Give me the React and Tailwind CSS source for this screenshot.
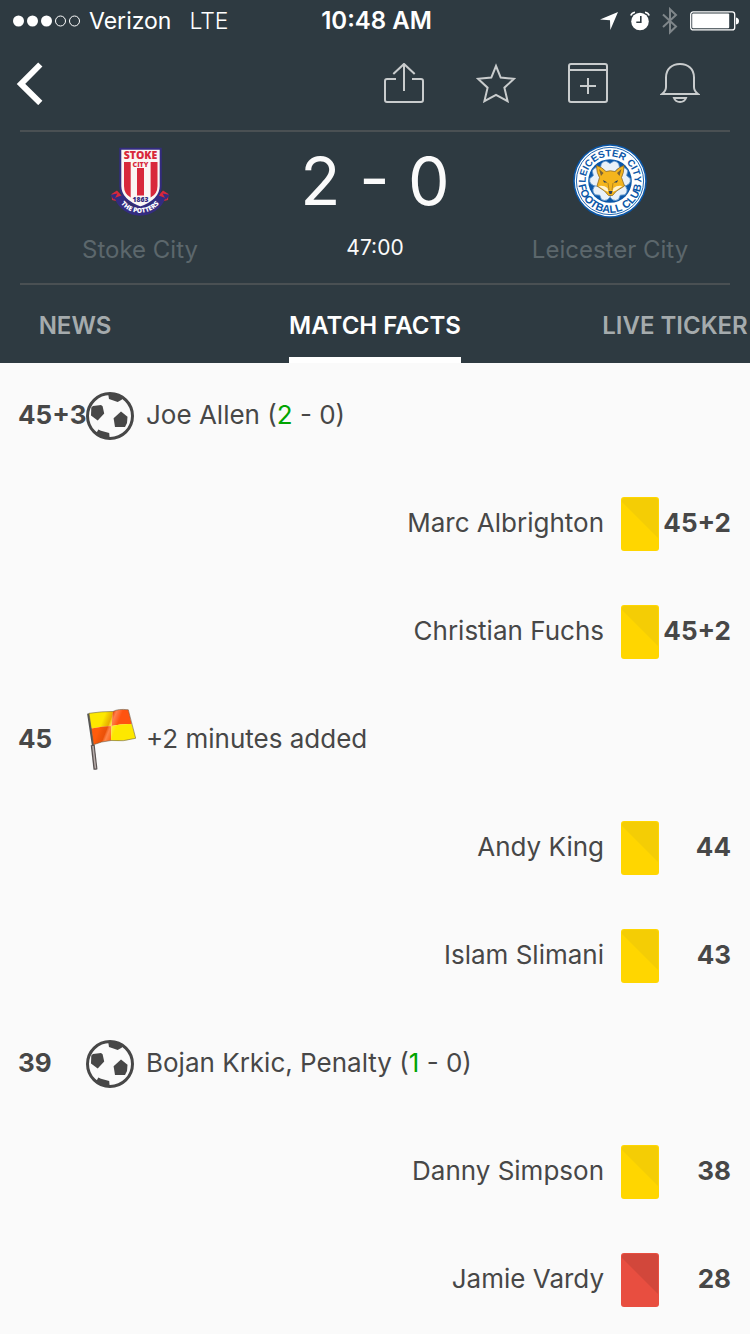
import React from 'react';

const events = [
  { side: 'home', time: '45+3', icon: 'goal', text: 'Joe Allen', score: ['2', '0'] },
  { side: 'away', time: '45+2', icon: 'yellow', text: 'Marc Albrighton' },
  { side: 'away', time: '45+2', icon: 'yellow', text: 'Christian Fuchs' },
  { side: 'home', time: '45', icon: 'flag', text: '+2 minutes added' },
  { side: 'away', time: '44', icon: 'yellow', text: 'Andy King' },
  { side: 'away', time: '43', icon: 'yellow', text: 'Islam Slimani' },
  { side: 'home', time: '39', icon: 'goal', text: 'Bojan Krkic, Penalty', score: ['1', '0'] },
  { side: 'away', time: '38', icon: 'yellow', text: 'Danny Simpson' },
  { side: 'away', time: '28', icon: 'red', text: 'Jamie Vardy' },
];

function StatusBar() {
  return (
    <div className="grid h-10 grid-cols-[1fr_auto_1fr] items-center pl-[13px] pr-[10px] pt-0.5 text-2xl text-white">
      <div className="flex items-center text-[23px]">
        <svg width="68" height="12" viewBox="0 0 68 12" aria-hidden="true">
          <g fill="#fff">
            <circle cx="5.5" cy="6" r="5.5" />
            <circle cx="19.5" cy="6" r="5.5" />
            <circle cx="33.5" cy="6" r="5.5" />
          </g>
          <g fill="none" stroke="#fff">
            <circle cx="47.5" cy="6" r="5" />
            <circle cx="61.5" cy="6" r="5" />
          </g>
        </svg>
        <span className="ml-2">Verizon</span>
        <span className="ml-[18px] font-light">LTE</span>
      </div>
      <span className="font-semibold">10:48 AM</span>
      <div className="flex items-center justify-end">
        <svg width="18" height="18" viewBox="0 0 18 18" fill="#fff" aria-hidden="true">
          <path d="M0 7.5 18 0 10.3 18 10 8.2Z" />
        </svg>
        <svg className="ml-3" width="20" height="20" viewBox="0 0 20 20" aria-hidden="true">
          <circle cx="10" cy="10.5" r="8.8" fill="#fff" />
          <path d="M.8 4.6Q1.7 1.6 5 1.2M19.2 4.6Q18.3 1.6 15 1.2" fill="none" stroke="#fff" strokeWidth="1.6" />
          <path d="M10.8 5v6.2H6.3" fill="none" stroke="#2e3a41" strokeWidth="1.6" />
        </svg>
        <svg className="ml-3" width="16" height="28" viewBox="0 0 16 28" aria-hidden="true">
          <path d="M1 7.5 14 19.5 8 25.3V2.2L14 8 1 20" fill="none" stroke="#7f868a" strokeWidth="2" />
        </svg>
        <svg className="ml-3" width="50" height="20" viewBox="0 0 50 20" aria-hidden="true">
          <rect x=".7" y=".9" width="44" height="18" rx="2.5" fill="none" stroke="#fff" strokeWidth="1.3" />
          <rect x="2.2" y="2.5" width="37" height="14.8" rx="1" fill="#fff" />
          <path d="M46 6.5q3 .5 3 3.5t-3 3.5z" fill="#fff" />
        </svg>
      </div>
    </div>
  );
}

function ToolButton({ label, children }) {
  return (
    <button type="button" aria-label={label}>
      <svg width="40" height="40" viewBox="0 0 40 40" fill="none" stroke="#c9cccd" strokeWidth="2">
        {children}
      </svg>
    </button>
  );
}

function Toolbar() {
  return (
    <div className="mb-1 flex h-[86px] items-center justify-between pl-4 pr-[50px]">
      <button type="button" aria-label="Back">
        <svg width="28" height="44" viewBox="0 0 28 44" fill="none" stroke="#fff" strokeWidth="6">
          <path d="M24.300 3.500 5 23 24.300 42" />
        </svg>
      </button>
      <div className="flex gap-[52px]">
        <ToolButton label="Share">
          <path d="M12 16H3a2 2 0 0 0-2 2v19a2 2 0 0 0 2 2h34a2 2 0 0 0 2-2V18a2 2 0 0 0-2-2h-9M20 28V1M9.3 11 20 .9 30.7 11" />
        </ToolButton>
        <ToolButton label="Favourite">
          <path d="M20 3 24.7 14.6 38 15.8 28.4 24.7 31.6 38.2 20 31.8 8.4 38.2 11.6 24.7 2 15.8 15.3 14.6Z" />
        </ToolButton>
        <ToolButton label="Add to calendar">
          <rect x="1" y="1" width="38" height="38" rx="2" />
          <path d="M1 7h38M20 15v16M12 23h16" />
        </ToolButton>
        <ToolButton label="Notifications">
          <path d="M2 31Q6 28 6 24V14.5C6 6 12 1 20 1s14 5 14 13.5V24q0 4 4 7Z" />
          <path d="M14 35h12q-1.500 4-6 4t-6-4Z" />
        </ToolButton>
      </div>
    </div>
  );
}

function StokeCrest() {
  return (
    <svg width="64" height="74" viewBox="0 0 64 74" role="img" aria-label="Stoke City crest">
      <path d="M3.500 50 9 46.500 14 52 12 58 4 56ZM60.500 50 55 46.500 50 52 52 58 60 56Z" fill="#d8283b" />
      <path d="M3.500 51.500 8 50.500 6 54.500ZM60.500 51.500 56 50.500 58 54.500Z" fill="#342c80" stroke="#342c80" strokeWidth="1.500" />
      <path d="M12.300 4.700H52.700V42Q52.700 56 32.500 63.500 12.300 56 12.300 42Z" fill="#faf6f4" stroke="#342c80" strokeWidth="2" />
      <path d="M16 18h6.700v35.500Q16 50 16 42ZM29 24h7v27.500h-7ZM42.600 18H49.500v24q0 8-6.900 11.500Z" fill="#d8283b" />
      <path d="M10.600 52.500A22.800 22.800 0 0 0 53.400 52.500" fill="none" stroke="#342c80" strokeWidth="8.600" />
      <g fontFamily="'Open Sans', sans-serif" fontWeight="800" textAnchor="middle">
        <text x="32.500" y="15.200" fontSize="10.500" fill="#d8283b">STOKE</text>
        <text x="32.500" y="22.700" fontSize="7" fill="#d8283b">CITY</text>
        <text x="32.500" y="58.400" fontSize="6.800" fill="#342c80">1863</text>
        <path id="ribbon" d="M8 50A24.700 24.700 0 0 0 56 50" fill="none" />
        <text fontSize="6.600" fill="#fff">
          <textPath href="#ribbon" startOffset="50%">THE POTTERS</textPath>
        </text>
      </g>
    </svg>
  );
}

function LeicesterCrest() {
  const petals = [0, 72, 144, 216, 288];
  return (
    <svg width="74" height="74" viewBox="0 0 74 74" role="img" aria-label="Leicester City crest">
      <circle cx="37" cy="37" r="36.800" fill="#0b57a8" />
      <circle cx="37" cy="37" r="35.200" fill="#fff" />
      <circle cx="37" cy="37" r="33.600" fill="none" stroke="#0b57a8" strokeWidth=".9" />
      <circle cx="37" cy="37" r="21.800" fill="#0b57a8" />
      <g fill="#e9f1f8" stroke="#5b93ca" strokeWidth=".8">
        {petals.map((angle) => (
          <path key={angle} transform={`rotate(${angle} 37 37)`} d="M37 37 28 27Q26 18 33 17L37 19.500 41 17Q48 18 46 27Z" />
        ))}
      </g>
      <path id="arcTop" d="M12.800 40A24.400 24.400 0 1 1 61.200 40" fill="none" />
      <path id="arcBottom" d="M5.200 37A31.800 31.800 0 0 0 68.800 37" fill="none" />
      <g fontFamily="'Liberation Sans', sans-serif" fontWeight="700" fill="#0b57a8" textAnchor="middle">
        <text fontSize="9.800">
          <textPath href="#arcTop" startOffset="50%">LEICESTER CITY</textPath>
        </text>
        <text fontSize="10.800">
          <textPath href="#arcBottom" startOffset="50%">FOOTBALL CLUB</textPath>
        </text>
      </g>
      <path d="M23.500 21.500Q29 23 33 27.500 37 26 42 27.500 46 23 51 21.500 51 29 48.500 33.500L51.500 42 43.500 47 39.500 51.500H35.500L31.500 47 24 42 26.500 33.500Q23.500 29 23.500 21.500Z" fill="#f4b51d" stroke="#8a6a2a" strokeWidth=".8" />
      <path d="M26 25 30.500 29 28 32ZM48.500 25 44 29 46.500 32Z" fill="#7b6437" />
      <path d="M25.500 42Q31 41 34.500 44L35.500 48 32 46.500ZM49.500 42Q44 41 40.500 44L39.500 48 43 46.500Z" fill="#fff3d0" />
      <path d="M30 36 34.500 38.500 31 38.500ZM45 36 40.500 38.500 44 38.500ZM35.500 47h4l-1 3h-2Z" fill="#2d4058" />
      <path d="M35 39 36 46M40 39 39 46" stroke="#a67b22" strokeWidth=".8" />
    </svg>
  );
}

function Team({ name, children }) {
  return (
    <div className="flex flex-col items-center gap-4">
      {children}
      <span className="text-2xl leading-8 text-[#5c676c]">{name}</span>
    </div>
  );
}

function Scoreboard() {
  return (
    <section className="mx-5 grid grid-cols-[24fr_23fr_24fr] border-y-2 border-[#4a5053] pb-[17px] pt-3">
      <Team name="Stoke City"><StokeCrest /></Team>
      <div className="flex flex-col items-center gap-4 text-[#fafafa]">
        <span className="whitespace-nowrap text-[66px] leading-[74px]">2 - 0</span>
        <span className="text-[21px] leading-7">47:00</span>
      </div>
      <Team name="Leicester City"><LeicesterCrest /></Team>
    </section>
  );
}

function Tabs() {
  return (
    <nav className="flex h-[78px] justify-center overflow-hidden text-2xl font-semibold">
      {['NEWS', 'MATCH FACTS', 'LIVE TICKER'].map((tab) => {
        const active = tab === 'MATCH FACTS';
        return (
          <a
            key={tab}
            href="#"
            aria-current={active ? 'page' : undefined}
            className="flex w-2/5 shrink-0 justify-center whitespace-nowrap"
          >
            <span
              className={
                active
                  ? 'flex items-center border-b-[6px] border-white pt-2.5 text-white'
                  : 'flex items-center border-b-[6px] border-transparent pt-2.5 text-[#a5abad]'
              }
            >
              {tab}
            </span>
          </a>
        );
      })}
    </nav>
  );
}

function Ball() {
  return (
    <svg width="48" height="48" viewBox="0 0 48 48" fill="#474747" role="img" aria-label="Goal">
      <circle cx="24" cy="24" r="22.500" fill="#fafafa" stroke="#474747" strokeWidth="3" />
      <path d="M5.300 15.500 7 14 15 13 16.600 14.200 18.200 21.500 11.700 28.500 5 23.500Z" />
      <path d="M35 19.400 41.500 24.700 41 31 39 35 29 35 27.600 26.300Z" />
      <path d="M22 1 37 4 36 7.500 31.700 9.900 23 6.900Z" />
      <path d="M8.300 41 11 40 12.300 37.500 15 38.700 23.200 41 23.700 47Q15 47 8.300 41Z" />
    </svg>
  );
}

function Flag() {
  return (
    <svg width="50" height="64" viewBox="0 0 50 64" role="img" aria-label="Added time">
      <defs>
        <linearGradient id="fold" x1="0" x2="1" y1="0" y2=".3">
          <stop offset=".35" stopColor="#a33300" stopOpacity="0" />
          <stop offset=".5" stopColor="#c63c00" stopOpacity=".35" />
          <stop offset=".56" stopColor="#fff" stopOpacity=".25" />
          <stop offset=".68" stopColor="#fff" stopOpacity="0" />
        </linearGradient>
      </defs>
      <g transform="translate(1 0)">
        <path d="M1.300 5.500 6 37 8.500 61.500" fill="none" stroke="#555" strokeWidth="2.400" />
        <path d="M5.700 37 8.500 61.500" fill="none" stroke="#5a5352" strokeWidth="4" />
        <path d="M5.900 38 8.500 60.500" fill="none" stroke="#b8aeac" strokeWidth="1.500" />
        <path d="M2 5.300Q15 3.300 26 3.500L24.500 18Q15 18 4.500 20.500Z" fill="#fde800" />
        <path d="M26 3.500Q31 .5 41.300 1.800L44.700 16Q35 15.500 24.500 18Z" fill="#ff5310" />
        <path d="M4.500 20.500Q15 18 24.500 18L24 32.500Q14 33.500 6.500 36.700Z" fill="#ff5c0c" />
        <path d="M24.500 18Q35 15.500 44.700 16L48.700 30.300Q36 34 24 32.500Z" fill="#fde800" />
        <path d="M2 5.300Q15 3.300 26 3.500 31 .5 41.300 1.800L48.700 30.300Q36 34 24 32.500 14 33.500 6.500 36.700Z" fill="url(#fold)" stroke="#6a604a" strokeOpacity=".65" strokeWidth=".9" />
      </g>
    </svg>
  );
}

function Card({ red }) {
  return (
    <svg width="38" height="54" viewBox="0 0 38 54" role="img" aria-label={red ? 'Red card' : 'Yellow card'}>
      <rect width="38" height="54" rx="3" fill={red ? '#e84e40' : '#ffd600'} />
      <path d="M1 4Q1 1 4 1H34Q37 1 37 4V41L1 5Z" fill={red ? '#d2473b' : '#f4cd05'} />
    </svg>
  );
}

function EventIcon({ kind }) {
  if (kind === 'goal') return <Ball />;
  if (kind === 'flag') return <Flag />;
  return <Card red={kind === 'red'} />;
}

function EventRow({ event }) {
  if (event.side === 'away') {
    return (
      <li className="flex h-[104px] items-center justify-end pr-[19px]">
        <span className="mr-[17px]">{event.text}</span>
        <span className="flex pt-0.5">
          <EventIcon kind={event.icon} />
        </span>
        <time className="w-[72px] text-right font-bold">{event.time}</time>
      </li>
    );
  }
  return (
    <li className="flex h-[104px] items-center pl-[18px]">
      <time className="w-[68px] shrink-0 font-bold">{event.time}</time>
      <span className="flex w-[60px] shrink-0 pt-0.5">
        <EventIcon kind={event.icon} />
      </span>
      <span>
        {event.text}
        {event.score && (
          <>
            {' '}(<span className="text-[#00a400]">{event.score[0]}</span> - {event.score[1]})
          </>
        )}
      </span>
    </li>
  );
}

export default function App() {
  return (
    <div className="min-h-screen bg-[#fafafa] font-['Inter',sans-serif]">
      <header className="bg-[#2e3a41]">
        <StatusBar />
        <Toolbar />
        <Scoreboard />
        <Tabs />
      </header>
      <main>
        <ul className="flex flex-col gap-1 text-[26px] leading-8 text-[#474747]">
          {events.map((event) => (
            <EventRow key={event.time + event.text} event={event} />
          ))}
        </ul>
      </main>
    </div>
  );
}
